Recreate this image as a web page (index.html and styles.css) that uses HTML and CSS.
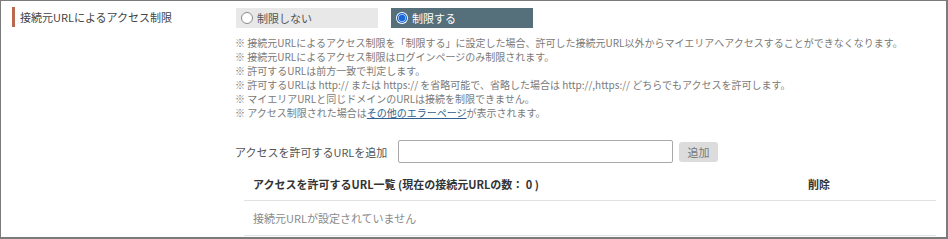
FILE: index.html
```html
<!DOCTYPE html>
<html lang="ja">
<head>
<meta charset="utf-8">
<link rel="stylesheet" href="styles.css">
</head>
<body>
<div class="frame">
  <div class="row">
    <div class="label-col">
      <span class="accent"></span>
      <span class="label">接続元URLによるアクセス制限</span>
    </div>
    <div class="content-col">
      <div class="radios">
        <label class="radio">
          <svg class="dot" width="12" height="12" viewBox="0 0 12 12"><circle cx="6" cy="6" r="5.5" fill="#fff" stroke="#8a8a8a" stroke-width="1"/></svg>
          <span>制限しない</span>
        </label>
        <label class="radio checked">
          <svg class="dot" width="12" height="12" viewBox="0 0 12 12"><circle cx="6" cy="6" r="6" fill="#fff"/><circle cx="6" cy="6" r="4.4" fill="#fff" stroke="#1a66d6" stroke-width="1.4"/><circle cx="6" cy="6" r="3.2" fill="#1a66d6"/></svg>
          <span>制限する</span>
        </label>
      </div>
      <ul class="notes">
        <li>※ 接続元URLによるアクセス制限を「制限する」に設定した場合、許可した接続元URL以外からマイエリアへアクセスすることができなくなります。</li>
        <li>※ 接続元URLによるアクセス制限はログインページのみ制限されます。</li>
        <li>※ 許可するURLは前方一致で判定します。</li>
        <li>※ 許可するURLは http:// または https:// を省略可能で、省略した場合は http://,https:// どちらでもアクセスを許可します。</li>
        <li>※ マイエリアURLと同じドメインのURLは接続を制限できません。</li>
        <li>※ アクセス制限された場合は<a class="link" href="#">その他のエラーページ</a>が表示されます。</li>
      </ul>
      <div class="add-row">
        <span class="add-label">アクセスを許可するURLを追加</span>
        <input class="url-input" type="text">
        <button class="add-btn" type="button">追加</button>
      </div>
      <div class="table">
        <div class="thead">
          <span class="th-main">アクセスを許可するURL一覧 (現在の接続元URLの数： 0 )</span>
          <span class="th-del">削除</span>
        </div>
        <div class="tbody">
          <span class="empty">接続元URLが設定されていません</span>
        </div>
      </div>
    </div>
  </div>
</div>
</body>
</html>
```
FILE: styles.css
```css
* { box-sizing: border-box; }
html, body { margin: 0; padding: 0; background: #fff; }
body {
  font-family: "Noto Sans CJK JP", "Noto Sans", sans-serif;
  color: #333;
}
.frame {
  width: 948px;
  height: 239px;
  overflow: hidden;
  border-style: solid;
  border-color: #7b7b7b;
  border-width: 1px 2px 2px 1px;
}
.row {
  display: flex;
}
.label-col {
  width: 234px;
  flex: none;
  display: flex;
  align-items: flex-start;
  padding: 6px 0 0 11px;
}
.accent {
  width: 3px;
  height: 20px;
  background: #b76a50;
  flex: none;
}
.label {
  margin-left: 5px;
  font-size: 11px;
  line-height: 20px;
  color: #444;
}
.content-col {
  flex: 1;
  padding-top: 7px;
}
.radios {
  display: flex;
  gap: 13px;
  padding-left: 1px;
}
.radio {
  width: 142px;
  height: 20px;
  display: flex;
  align-items: center;
  gap: 4px;
  padding-left: 5px;
  background: #e8e8e8;
  font-size: 11px;
  color: #555;
}
.radio.checked {
  background: #556f7b;
  color: #fff;
}
.dot { flex: none; }
.notes {
  list-style: none;
  margin: 8px 0 0;
  padding: 0;
  font-size: 10px;
  line-height: 14px;
  color: #7a7a7a;
}
.link {
  color: #2f5f8f;
  text-decoration: underline;
}
.add-row {
  display: flex;
  align-items: center;
  margin-top: 20px;
  height: 23px;
}
.add-label {
  width: 163px;
  font-size: 11px;
  color: #555;
}
.url-input {
  width: 275px;
  height: 23px;
  border: 1px solid #a9a9a9;
  border-radius: 2px;
  margin: 0;
  padding: 0 4px;
}
.add-btn {
  margin-left: 6px;
  width: 39px;
  height: 20px;
  border: none;
  border-radius: 3px;
  background: #dcdcdc;
  color: #777;
  font-family: inherit;
  font-size: 11px;
  padding: 0;
}
.table {
  margin: 4px 10px 0 9px;
}
.thead {
  display: flex;
  align-items: center;
  height: 34px;
  border-bottom: 1px solid #e2e2e2;
  font-size: 11px;
  font-weight: bold;
  color: #333;
}
.th-main {
  padding-left: 9px;
  width: 564px;
}
.tbody {
  height: 35px;
  display: flex;
  align-items: center;
  border-bottom: 1px solid #e2e2e2;
  padding-left: 9px;
}
.empty {
  font-size: 11px;
  color: #8a8a8a;
}
```
